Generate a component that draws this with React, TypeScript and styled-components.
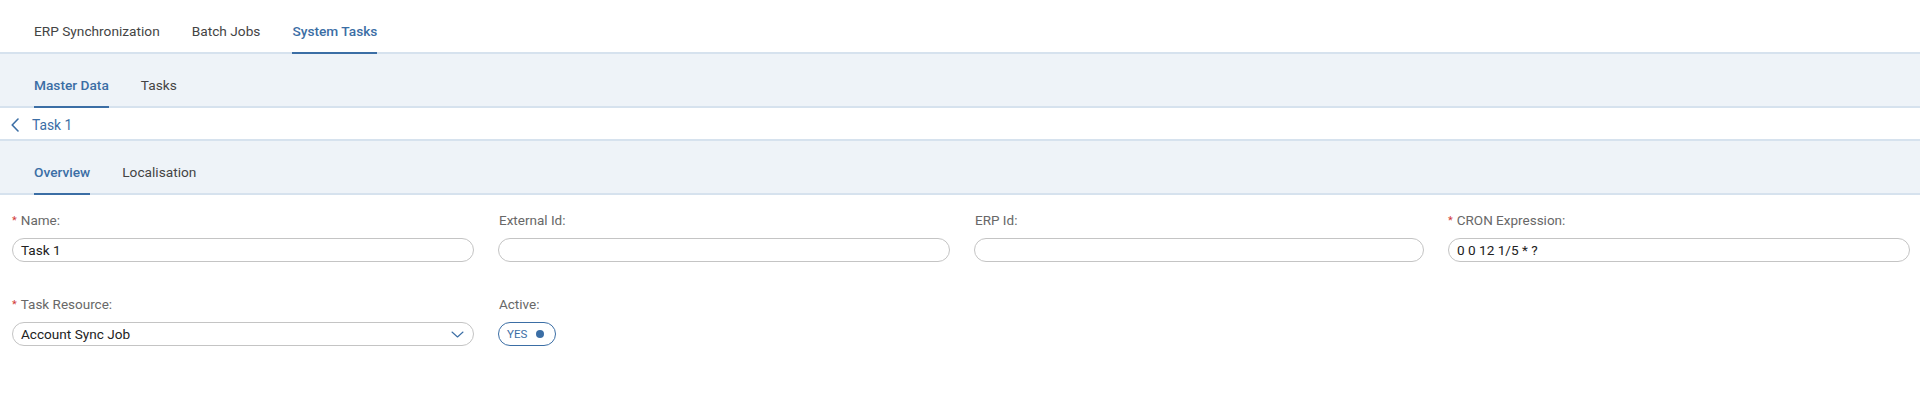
import React from "react";
import styled, { createGlobalStyle } from "styled-components";

const GlobalStyle = createGlobalStyle`
  html, body { margin: 0; padding: 0; background: #ffffff; }
  body { font-family: Roboto, "Liberation Sans", Arial, sans-serif; color: #333; }
  * { box-sizing: border-box; }
`;

const BLUE = "#3b6ea5";
const BORDER = "#d6e2ee";
const BAR = "#eef3f8";

const Page = styled.div`
  width: 1920px;
  min-height: 420px;
  display: flex;
  flex-direction: column;
`;

const TabBar = styled.div<{ $tinted?: boolean }>`
  display: flex;
  height: 54px;
  padding-left: 18px;
  background: ${(p) => (p.$tinted ? BAR : "#ffffff")};
  border-bottom: 2px solid ${BORDER};
`;

const Tab = styled.div<{ $active?: boolean }>`
  margin: 0 16px -2px;
  padding-top: 22px;
  height: 54px;
  font-size: 13.7px;
  line-height: 18px;
  font-weight: ${(p) => (p.$active ? 500 : 400)};
  color: ${(p) => (p.$active ? BLUE : "#444")};
  border-bottom: 2px solid ${(p) => (p.$active ? BLUE : "transparent")};
  white-space: nowrap;
`;

const Breadcrumb = styled.div`
  display: flex;
  align-items: center;
  height: 33px;
  padding: 3px 0 0 11px;
  border-bottom: 2px solid ${BORDER};
  color: ${BLUE};
  font-size: 13.8px;
  gap: 13px;
`;

const Form = styled.div`
  display: grid;
  grid-template-columns: 462px 452px 450px 462px;
  column-gap: 24px;
  row-gap: 33px;
  padding: 16px 0 0 12px;
  align-items: start;
`;

const Field = styled.div`
  display: flex;
  flex-direction: column;
  gap: 9px;
`;

const Label = styled.label`
  display: flex;
  align-items: center;
  height: 18px;
  font-size: 13.5px;
  line-height: 18px;
  color: #686868;
  padding-left: 1px;
`;

const Star = styled.span`
  color: #d23a3a;
  font-size: 11px;
  margin: 0 4px 0 -1px;
  position: relative;
  top: 1px;
`;

const Input = styled.div`
  display: flex;
  align-items: center;
  justify-content: space-between;
  height: 24px;
  border: 1px solid #c4c4c4;
  border-radius: 12px;
  padding: 0 9px 0 8px;
  font-size: 13.6px;
  color: #222;
  background: #fff;
`;

const Toggle = styled.div`
  display: inline-flex;
  align-items: center;
  gap: 9px;
  width: 58px;
  height: 24px;
  border: 1.5px solid ${BLUE};
  border-radius: 12px;
  padding-left: 8px;
  font-size: 11.5px;
  color: ${BLUE};
`;

const Dot = styled.span`
  width: 8px;
  height: 8px;
  border-radius: 50%;
  background: ${BLUE};
`;

const Req = () => <Star>*</Star>;

export default function App() {
  return (
    <Page>
      <GlobalStyle />
      <TabBar>
        <Tab>ERP Synchronization</Tab>
        <Tab>Batch Jobs</Tab>
        <Tab $active>System Tasks</Tab>
      </TabBar>
      <TabBar $tinted>
        <Tab $active>Master Data</Tab>
        <Tab>Tasks</Tab>
      </TabBar>
      <Breadcrumb>
        <svg width="8" height="14" viewBox="0 0 8 14">
          <path d="M7 1 L1.2 7 L7 13" fill="none" stroke={BLUE} strokeWidth="1.6" strokeLinecap="round" strokeLinejoin="round" />
        </svg>
        <span>Task 1</span>
      </Breadcrumb>
      <TabBar $tinted>
        <Tab $active>Overview</Tab>
        <Tab>Localisation</Tab>
      </TabBar>
      <Form>
        <Field>
          <Label><Req />Name:</Label>
          <Input>Task 1</Input>
        </Field>
        <Field>
          <Label>External Id:</Label>
          <Input />
        </Field>
        <Field>
          <Label>ERP Id:</Label>
          <Input />
        </Field>
        <Field>
          <Label><Req />CRON Expression:</Label>
          <Input>0 0 12 1/5 * ?</Input>
        </Field>
        <Field>
          <Label><Req />Task Resource:</Label>
          <Input>
            <span>Account Sync Job</span>
            <svg width="13" height="7" viewBox="0 0 13 7">
              <path d="M1 1 L6.5 6 L12 1" fill="none" stroke={BLUE} strokeWidth="1.1" strokeLinecap="round" strokeLinejoin="round" />
            </svg>
          </Input>
        </Field>
        <Field>
          <Label>Active:</Label>
          <Toggle>
            <span>YES</span>
            <Dot />
          </Toggle>
        </Field>
      </Form>
    </Page>
  );
}
